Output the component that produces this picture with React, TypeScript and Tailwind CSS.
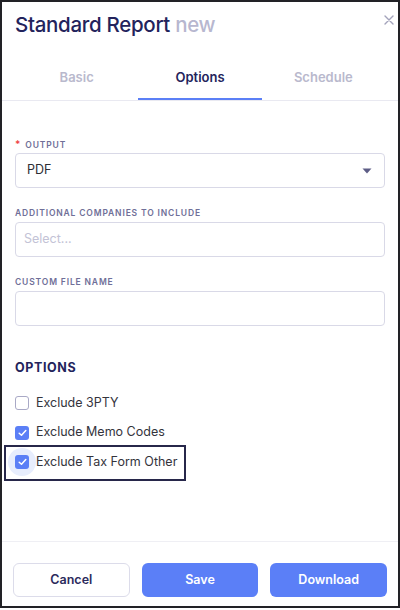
import React, { useState } from 'react';

const labelCls =
  'h-[12px] leading-[12px] text-[8.5px] font-semibold uppercase tracking-[0.1em] text-[#6f6f98] mb-[3px]';

const Field: React.FC<{ label: string; required?: boolean; children: React.ReactNode }> = ({
  label,
  required,
  children,
}) => (
  <div className="mb-[19px]">
    <div className={labelCls}>
      {required && <span className="text-[#ef4444] text-[10px] mr-[4px]">*</span>}
      {label}
    </div>
    {children}
  </div>
);

const CheckBox: React.FC<{ checked: boolean; focus?: boolean }> = ({ checked, focus }) => (
  <span className="relative flex items-center justify-center w-[14px] h-[14px]">
    {focus && (
      <span className="absolute left-[-7px] top-[-7px] w-[28px] h-[28px] rounded-full bg-[#e7edfd]" />
    )}
    {checked ? (
      <span className="relative flex items-center justify-center w-[14px] h-[14px] rounded-[3px] bg-[#5b7ff6]">
        <svg width="9" height="8" viewBox="0 0 9 8" fill="none">
          <path
            d="M1.2 4.2 L3.5 6.3 L7.8 1.6"
            stroke="white"
            strokeWidth="1.5"
            strokeLinecap="round"
            strokeLinejoin="round"
          />
        </svg>
      </span>
    ) : (
      <span className="relative w-[14px] h-[14px] rounded-[3px] border-[1.5px] border-[#a9a9c6] bg-white" />
    )}
  </span>
);

export default function App() {
  const [tab] = useState('Options');
  const tabs = ['Basic', 'Options', 'Schedule'];

  return (
    <div className="w-[400px] h-[610px] bg-white" style={{ fontFamily: 'Inter, "Liberation Sans", sans-serif' }}>
      <div className="w-[400px] h-[608px] border-2 border-[#222226] flex flex-col">
        {/* Header */}
        <div className="relative pt-[9px] px-[13px]">
          <h1 className="h-[28px] leading-[28px] text-[20.5px] font-medium text-[#23235c] tracking-[-0.015em]">
            Standard Report <span className="text-[#b7b7cf]">new</span>
          </h1>
          <button className="absolute right-[2px] top-[11px] w-[14px] h-[14px] flex items-center justify-center">
            <svg width="10" height="10" viewBox="0 0 10 10">
              <path d="M1 1 L9 9 M9 1 L1 9" stroke="#a3a3bb" strokeWidth="1.4" strokeLinecap="round" />
            </svg>
          </button>
        </div>

        {/* Tabs */}
        <div className="mt-[19px] border-b border-[#e9e9f1]">
          <div className="flex px-[13px]">
            {tabs.map((t) => (
              <div
                key={t}
                className={
                  'flex-1 h-[42px] flex items-center justify-center text-[13px] font-semibold border-b-2 ' +
                  (t === tab ? 'text-[#24245c] border-[#5b7ff6]' : 'text-[#b9b9cd] border-transparent')
                }
              >
                {t}
              </div>
            ))}
          </div>
        </div>

        {/* Body */}
        <div className="flex flex-col px-[13px] pt-[37px]">
          <Field label="Output" required>
            <div className="h-[35px] rounded-[4px] border border-[#d9d9e7] flex items-center justify-between pl-[11px] pr-[12px]">
              <span className="text-[12.5px] text-[#2d2d35]">PDF</span>
              <svg width="10" height="6" viewBox="0 0 10 6">
                <path d="M0.5 0.5 L9.5 0.5 L5 5.5 Z" fill="#5d5d86" />
              </svg>
            </div>
          </Field>

          <Field label="Additional companies to include">
            <div className="h-[35px] rounded-[4px] border border-[#d9d9e7] flex items-center pl-[8px]">
              <span className="text-[12.5px] text-[#c3c3d6]">Select...</span>
            </div>
          </Field>

          <Field label="Custom file name">
            <div className="h-[35px] rounded-[4px] border border-[#d9d9e7]" />
          </Field>

          <div className="mt-[15px] h-[16px] leading-[16px] text-[12.5px] font-bold tracking-[0.05em] text-[#23235c]">
            OPTIONS
          </div>

          <div className="mt-[17px] flex flex-col gap-[9.5px]">
            <label className="flex items-center gap-[7px] h-[20px]">
              <CheckBox checked={false} />
              <span className="text-[12.5px] text-[#34343c]">Exclude 3PTY</span>
            </label>
            <label className="flex items-center gap-[7px] h-[20px]">
              <CheckBox checked />
              <span className="text-[12.5px] text-[#34343c]">Exclude Memo Codes</span>
            </label>
            <label className="relative flex items-center gap-[7px] h-[20px]">
              <span className="absolute left-[-11px] top-[-7px] w-[182px] h-[36px] border-2 border-[#27274a]" />
              <CheckBox checked focus />
              <span className="relative text-[12.5px] text-[#34343c]">Exclude Tax Form Other</span>
            </label>
          </div>
        </div>

        {/* Footer */}
        <div className="mt-auto border-t border-[#efeff4] pt-[21px] pb-[9px] px-[11px] grid grid-cols-3 gap-[12px]">
          <button className="h-[34px] rounded-[6px] border border-[#dcdcea] bg-white text-[12.5px] font-semibold text-[#2b2b5c]">
            Cancel
          </button>
          <button className="h-[34px] rounded-[6px] bg-[#5b7ff7] text-[12.5px] font-semibold text-white">
            Save
          </button>
          <button className="h-[34px] rounded-[6px] bg-[#5b7ff7] text-[12.5px] font-semibold text-white">
            Download
          </button>
        </div>
      </div>
    </div>
  );
}
